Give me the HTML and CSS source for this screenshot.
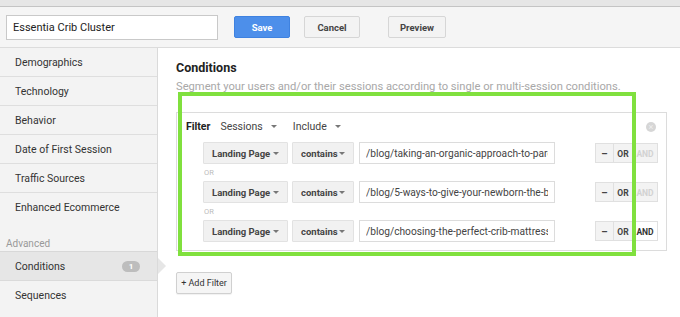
FILE: index.html
```html
<!DOCTYPE html>
<html lang="en">

<head>
  <meta charset="UTF-8">
  <link rel="stylesheet" href="styles.css">
  <title>Segment Editor</title>
</head>

<body>
  <div class="top-strip"></div>

  <div class="toolbar">
    <input type="text" class="name-input" value="Essentia Crib Cluster">
    <button class="btn btn-save">Save</button>
    <button class="btn btn-cancel">Cancel</button>
    <button class="btn btn-preview">Preview</button>
  </div>

  <div class="layout">
    <div class="sidebar">
      <div class="nav-item">Demographics</div>
      <div class="nav-item">Technology</div>
      <div class="nav-item">Behavior</div>
      <div class="nav-item">Date of First Session</div>
      <div class="nav-item">Traffic Sources</div>
      <div class="nav-item last">Enhanced Ecommerce</div>
      <div class="nav-label">Advanced</div>
      <div class="nav-item selected">Conditions <span class="badge">1</span></div>
      <div class="nav-item last">Sequences</div>
    </div>

    <div class="main">
      <h2 class="title">Conditions</h2>
      <p class="subtitle">Segment your users and/or their sessions according to single or multi-session conditions.</p>

      <div class="panel">
        <div class="filter-head">
          <span class="filter-label">Filter</span>
          <span class="menu">Sessions <i class="caret"></i></span>
          <span class="menu">Include <i class="caret"></i></span>
          <span class="close">&times;</span>
        </div>

        <div class="cond-row">
          <span class="dropdown dim-1">Landing Page <i class="caret"></i></span>
          <span class="dropdown dim-2">contains <i class="caret"></i></span>
          <input type="text" class="value-input" value="/blog/taking-an-organic-approach-to-parenting/">
          <div class="ops">
            <span class="op op-minus">&ndash;</span>
            <span class="op">OR</span>
            <span class="op op-off">AND</span>
          </div>
        </div>
        <div class="or-label">OR</div>
        <div class="cond-row">
          <span class="dropdown dim-1">Landing Page <i class="caret"></i></span>
          <span class="dropdown dim-2">contains <i class="caret"></i></span>
          <input type="text" class="value-input" value="/blog/5-ways-to-give-your-newborn-the-best-sleep/">
          <div class="ops">
            <span class="op op-minus">&ndash;</span>
            <span class="op">OR</span>
            <span class="op op-off">AND</span>
          </div>
        </div>
        <div class="or-label">OR</div>
        <div class="cond-row">
          <span class="dropdown dim-1">Landing Page <i class="caret"></i></span>
          <span class="dropdown dim-2">contains <i class="caret"></i></span>
          <input type="text" class="value-input" value="/blog/choosing-the-perfect-crib-mattress/">
          <div class="ops">
            <span class="op op-minus">&ndash;</span>
            <span class="op">OR</span>
            <span class="op op-on">AND</span>
          </div>
        </div>
      </div>

      <button class="btn btn-add">+ Add Filter</button>

      <div class="highlight"></div>
    </div>
  </div>
</body>

</html>
```

FILE: styles.css
```css
body {
  margin: 0;
  font-family: Roboto, "Liberation Sans", Arial, sans-serif;
  color: #333;
  background: #fff;
}

.top-strip {
  height: 6px;
  background: #e6e6e6;
  border-bottom: 1px solid #c4c4c4;
}

.toolbar {
  height: 40px;
  display: flex;
  align-items: center;
  padding-left: 6px;
  background: #f5f5f5;
  border-bottom: 1px solid #dcdcdc;
}

.name-input {
  width: 212px;
  height: 25px;
  box-sizing: border-box;
  border: 1px solid #c9c9c9;
  padding: 0 6px;
  font-family: Roboto, sans-serif;
  font-size: 11px;
  color: #222;
  background: #fff;
}

.btn {
  height: 22px;
  box-sizing: border-box;
  border: 1px solid #d6d6d6;
  border-radius: 2px;
  background: #f3f3f3;
  font-family: Roboto, sans-serif;
  font-size: 9.5px;
  font-weight: bold;
  color: #444;
  padding: 0;
}

.btn-save {
  width: 56px;
  margin-left: 16px;
  background: #4d8fea;
  border-color: #3f82e0;
  color: #fff;
}

.btn-cancel {
  width: 56px;
  margin-left: 14px;
}

.btn-preview {
  width: 58px;
  margin-left: 28px;
}

.layout {
  display: flex;
  height: 270px;
}

.sidebar {
  width: 157px;
  background: #f3f3f3;
  border-right: 1px solid #dadada;
  font-size: 10.5px;
  color: #333;
}

.nav-item {
  position: relative;
  height: 28px;
  line-height: 29px;
  padding-left: 15px;
  border-bottom: 1px solid #dedede;
}

.nav-item.last {
  border-bottom-color: transparent;
}

.nav-label {
  height: 14px;
  padding-top: 15px;
  line-height: 14px;
  padding-left: 6px;
  font-size: 10px;
  color: #999;
  border-bottom: 1px solid #d8d8d8;
}

.nav-item.selected {
  background: #e6e6e6;
  border-bottom-color: #dadada;
}

.nav-item.selected::after {
  content: "";
  position: absolute;
  right: -9px;
  top: 6px;
  border-top: 8px solid transparent;
  border-bottom: 8px solid transparent;
  border-left: 8px solid #e6e6e6;
}

.badge {
  position: absolute;
  left: 122px;
  top: 9px;
  width: 18px;
  height: 11px;
  line-height: 11px;
  border-radius: 6px;
  background: #bdbdbd;
  color: #fff;
  font-size: 8px;
  font-weight: bold;
  text-align: center;
}

.main {
  position: relative;
  flex: 1;
  padding: 12px 13px 0 18px;
}

.title {
  margin: 0;
  font-size: 12.5px;
  font-weight: bold;
  color: #222;
  line-height: 16px;
}

.subtitle {
  margin: 4px 0 0;
  font-size: 11.2px;
  line-height: 14px;
  color: #a8a8a8;
}

.panel {
  margin-top: 18px;
  border: 1px solid #dcdcdc;
  padding: 0 8px 8px 26px;
}

.filter-head {
  display: flex;
  align-items: center;
  height: 27px;
  padding-bottom: 2px;
  margin-left: -17px;
  font-size: 10.5px;
  color: #444;
}

.filter-label {
  font-weight: bold;
  color: #222;
  margin-right: 10px;
}

.menu {
  display: flex;
  align-items: center;
  margin-right: 16px;
}

.menu .caret {
  margin-left: 8px;
}

.caret {
  display: inline-block;
  width: 0;
  height: 0;
  border-left: 3px solid transparent;
  border-right: 3px solid transparent;
  border-top: 3px solid #777;
}

.close {
  margin-left: auto;
  margin-right: 2px;
  width: 10px;
  height: 10px;
  line-height: 10px;
  border-radius: 50%;
  background: #d6d6d6;
  color: #eee;
  font-size: 9px;
  text-align: center;
}

.cond-row {
  display: flex;
  align-items: center;
  height: 22px;
}

.dropdown {
  display: flex;
  align-items: center;
  justify-content: space-between;
  height: 22px;
  box-sizing: border-box;
  padding: 0 8px 0 8px;
  background: #f1f1f1;
  border: 1px solid #e2e2e2;
  border-radius: 1px;
  font-size: 9.5px;
  font-weight: bold;
  color: #444;
}

.dim-1 {
  width: 85px;
}

.dim-2 {
  width: 62px;
  margin-left: 4px;
}

.value-input {
  width: 196px;
  height: 22px;
  box-sizing: border-box;
  margin-left: 5px;
  border: 1px solid #dcdcdc;
  padding: 0 6px;
  font-family: Roboto, sans-serif;
  font-size: 10.2px;
  color: #444;
}

.ops {
  display: flex;
  margin-left: auto;
  height: 20px;
}

.op {
  height: 20px;
  line-height: 20px;
  box-sizing: border-box;
  border: 1px solid #e0e0e0;
  background: #f3f3f3;
  font-size: 8.5px;
  font-weight: bold;
  color: #444;
  text-align: center;
  width: 20px;
  margin-left: -1px;
}

.op-minus {
  width: 19px;
  margin-left: 0;
  font-size: 10px;
}

.op-off,
.op-on {
  width: 26px;
}

.op-off {
  color: #d2d2d2;
}

.op-on {
  background: #fff;
  color: #333;
}

.or-label {
  height: 17px;
  line-height: 17px;
  font-size: 7.5px;
  color: #bbb;
  padding-left: 1px;
}

.btn-add {
  display: block;
  margin-top: 21px;
  width: 56px;
  height: 22px;
  font-weight: normal;
  font-size: 9px;
  color: #333;
  background: #f5f5f5;
  border-color: #d0d0d0;
  box-shadow: 0 1px 1px rgba(0, 0, 0, 0.06);
}

.highlight {
  position: absolute;
  left: 20px;
  top: 44px;
  width: 450px;
  height: 156px;
  border: 4px solid #80e03e;
}
```
